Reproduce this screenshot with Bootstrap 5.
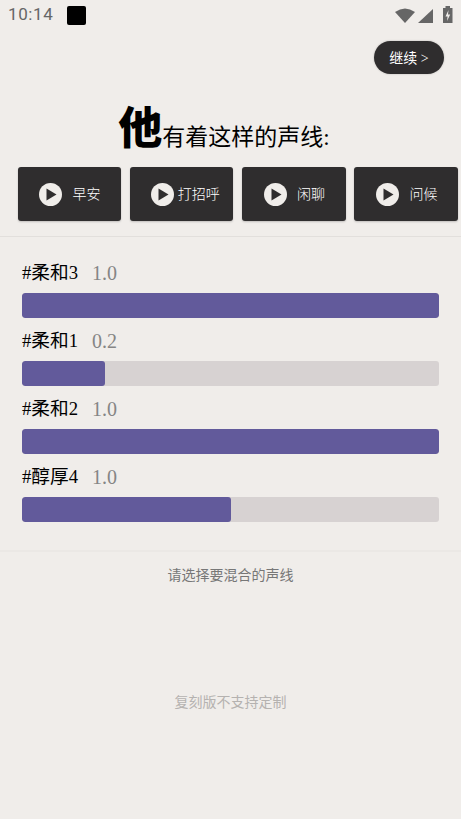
<!DOCTYPE html>
<html lang="zh">
<head>
<meta charset="utf-8">
<title>声线</title>
<link href="https://cdn.jsdelivr.net/npm/bootstrap@5.3.0/dist/css/bootstrap.min.css" rel="stylesheet">
<style>
html,body{height:100%}
body{background:#f0edea;font-family:"Liberation Serif","Noto Sans CJK SC",serif;color:#000;overflow:hidden;width:461px;height:819px}
.status-strip{height:30px;padding:0 4px 0 8px;color:#666;font-family:Roboto,sans-serif;font-size:17px}
.status-clock{letter-spacing:.6px}
.black-square{width:19px;height:19px;background:#000;border-radius:2px;margin-left:14px}
.top-strip{padding:11px 17px 0 0;height:67px}
.go-btn{width:70px;height:33px;padding-top:1px!important;background:#2f2d2e;color:#fff;border-radius:17px;font-size:14px;box-shadow:0 0 2px rgba(0,0,0,.25)}
.title-line{height:70px;padding:0 13px 15px 0;font-size:23px;line-height:1}
.title-big{font-size:44px;font-weight:900;line-height:1}
.title-rest{margin-bottom:3px}
.chip-row{padding-left:17.5px;gap:8.7px;height:54px}
.voice-chip{width:103.6px;height:54px;padding:0 10px 0 21.5px;background:#2f2d2e;color:#fff;border-radius:3px;font-size:14px;box-shadow:0 1px 2px rgba(0,0,0,.2);flex:none}
.chip-icon{flex:none}
.chip-text{font-weight:300;flex:1 1 auto;text-align:center;white-space:nowrap}
.rule-top{margin-top:15px;border-top:1px solid #e2dfdc}
.mix-list{padding:0 22px}
.mix-row{height:68px}
.mix-label{padding-top:25px;font-size:18.7px;line-height:22px}
.mix-name{width:70px}
.mix-value{color:#858585;font-size:20px}
.meter{height:25px;background:#d7d2d2;border-radius:3px;margin-top:9px;overflow:hidden}
.meter-fill{height:100%;background:#625a9b;border-radius:3px}
.rule-soft{margin-top:41px;border-top:2px solid #ebe8e5}
.hint-main{color:#777;font-size:14px;line-height:20px;margin-top:14px}
.hint-faint{color:#b5b2b0;font-size:14px;line-height:20px;margin-top:107px}
</style>
</head>
<body>
<div class="status-strip d-flex align-items-center">
  <span class="status-clock">10:14</span>
  <span class="black-square"></span>
  <svg class="ms-auto" width="62" height="18" viewBox="0 0 62 18" fill="#666">
    <path d="M0 6 Q10 -1 20 6 L10 17 Z"/>
    <path d="M23 17 L38 17 L38 3 Z"/>
    <path d="M48 2 H50.5 V0 H55 V2 H57.5 V17 H48 Z"/>
    <path d="M53.5 4 L50.5 10.5 H52.6 L52 15 L55.2 8.5 H53 Z" fill="#f0edea"/>
  </svg>
</div>
<div class="top-strip d-flex justify-content-end align-items-start">
  <button type="button" class="btn p-0 go-btn d-flex align-items-center justify-content-center">继续 &gt;</button>
</div>
<div class="title-line d-flex justify-content-center align-items-end"><span class="title-big">他</span><span class="title-rest">有着这样的声线:</span></div>
<div class="chip-row d-flex">
  <div class="voice-chip d-flex align-items-center">
    <svg class="chip-icon" width="23" height="23" viewBox="0 0 23 23"><circle cx="11.5" cy="11.5" r="11.5" fill="#f0edea"/><path d="M7.5 5.5 L17.5 11.5 L7.5 17.5 Z" fill="#2f2d2e"/></svg>
    <span class="chip-text">早安</span>
  </div>
  <div class="voice-chip d-flex align-items-center">
    <svg class="chip-icon" width="23" height="23" viewBox="0 0 23 23"><circle cx="11.5" cy="11.5" r="11.5" fill="#f0edea"/><path d="M7.5 5.5 L17.5 11.5 L7.5 17.5 Z" fill="#2f2d2e"/></svg>
    <span class="chip-text">打招呼</span>
  </div>
  <div class="voice-chip d-flex align-items-center">
    <svg class="chip-icon" width="23" height="23" viewBox="0 0 23 23"><circle cx="11.5" cy="11.5" r="11.5" fill="#f0edea"/><path d="M7.5 5.5 L17.5 11.5 L7.5 17.5 Z" fill="#2f2d2e"/></svg>
    <span class="chip-text">闲聊</span>
  </div>
  <div class="voice-chip d-flex align-items-center">
    <svg class="chip-icon" width="23" height="23" viewBox="0 0 23 23"><circle cx="11.5" cy="11.5" r="11.5" fill="#f0edea"/><path d="M7.5 5.5 L17.5 11.5 L7.5 17.5 Z" fill="#2f2d2e"/></svg>
    <span class="chip-text">问候</span>
  </div>
</div>
<div class="rule-top"></div>
<div class="mix-list">
  <div class="mix-row">
    <div class="mix-label d-flex"><span class="mix-name">#柔和3</span><span class="mix-value">1.0</span></div>
    <div class="meter"><div class="meter-fill" style="width:100%"></div></div>
  </div>
  <div class="mix-row">
    <div class="mix-label d-flex"><span class="mix-name">#柔和1</span><span class="mix-value">0.2</span></div>
    <div class="meter"><div class="meter-fill" style="width:20%"></div></div>
  </div>
  <div class="mix-row">
    <div class="mix-label d-flex"><span class="mix-name">#柔和2</span><span class="mix-value">1.0</span></div>
    <div class="meter"><div class="meter-fill" style="width:100%"></div></div>
  </div>
  <div class="mix-row">
    <div class="mix-label d-flex"><span class="mix-name">#醇厚4</span><span class="mix-value">1.0</span></div>
    <div class="meter"><div class="meter-fill" style="width:50%"></div></div>
  </div>
</div>
<div class="rule-soft"></div>
<div class="hint-main text-center">请选择要混合的声线</div>
<div class="hint-faint text-center">复刻版不支持定制</div>
<script src="https://cdn.jsdelivr.net/npm/bootstrap@5.3.0/dist/js/bootstrap.bundle.min.js"></script>
</body>
</html>
